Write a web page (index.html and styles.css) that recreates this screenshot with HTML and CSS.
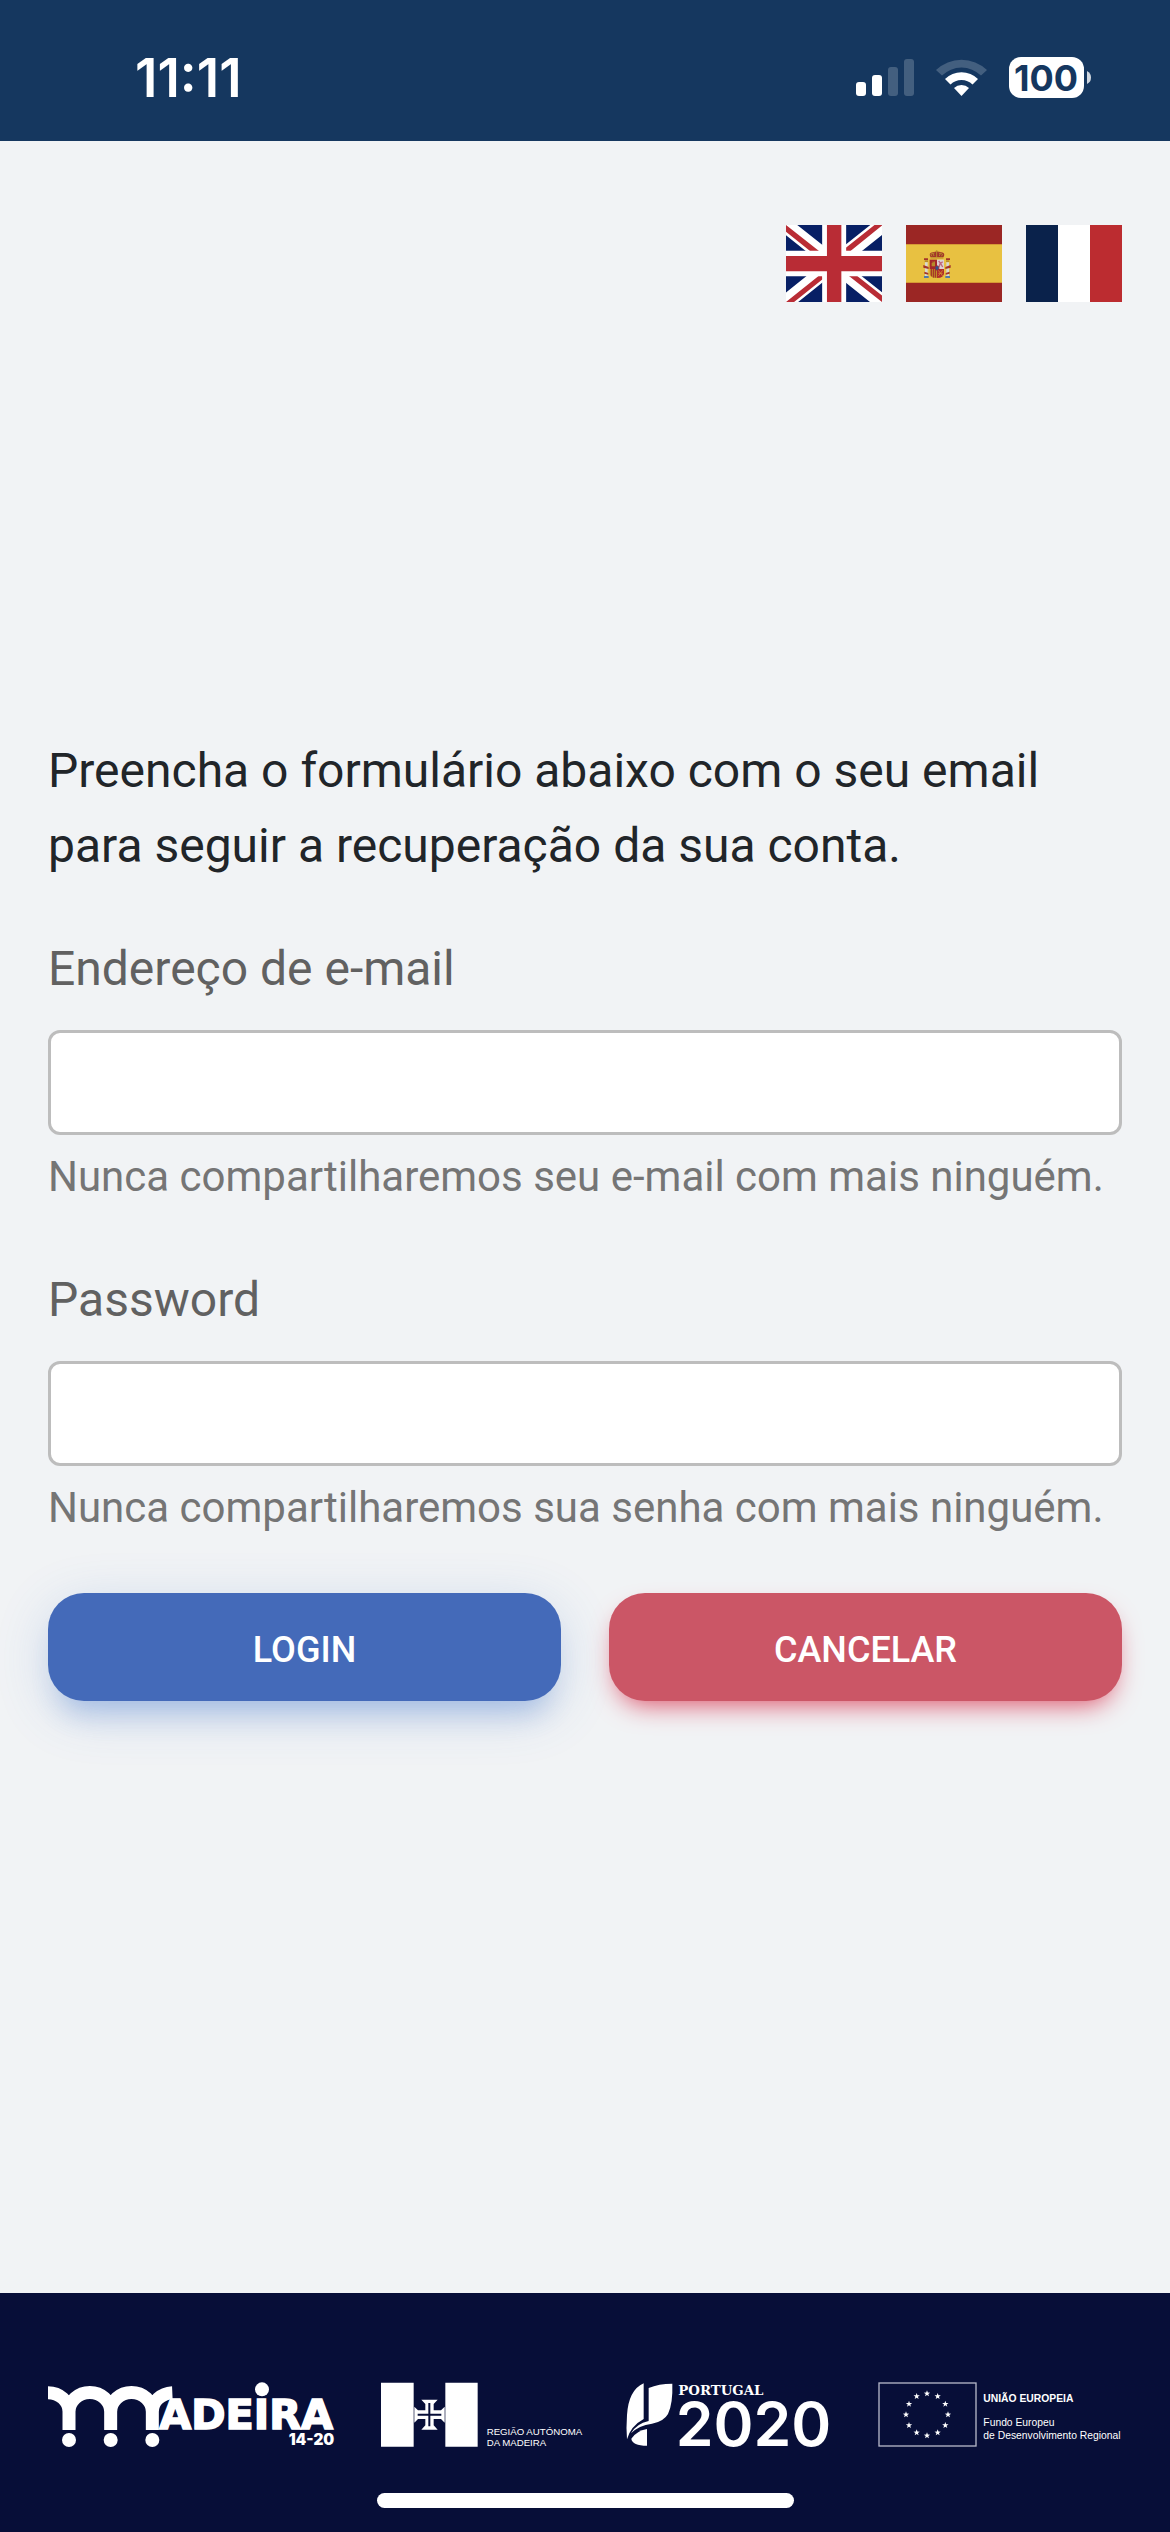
FILE: index.html
```html
<!DOCTYPE html>
<html lang="pt">
<head>
    <meta charset="UTF-8">
    <meta name="viewport" content="width=device-width, initial-scale=1.0">
    <title>Login</title>
    <link rel="stylesheet" href="styles.css">
</head>
<body>
    <header class="status-bar">
        <span class="time">11:11</span>
        <svg class="status-icons" viewBox="856 56 236 44" fill="#fff" aria-hidden="true">
            <!-- signal -->
            <rect x="856" y="82" width="10" height="14" rx="3"/>
            <rect x="872" y="75" width="10" height="21" rx="3"/>
            <rect x="888" y="67" width="10" height="29" rx="3" opacity=".2"/>
            <rect x="904" y="59" width="10" height="37" rx="3" opacity=".2"/>
            <!-- wifi -->
            <path d="M936 70A37 37 0 0 1 987 70L981 75.500A28 28 0 0 0 942 75.500Z" opacity=".2"/>
            <path d="M945 79A23.500 23.500 0 0 1 978 79L972.500 84.500A15.500 15.500 0 0 0 950.500 84.500Z"/>
            <path d="M954 88A11 11 0 0 1 969 88L961.500 96Z"/>
            <!-- battery -->
            <rect x="1009" y="57" width="75" height="41" rx="12"/>
            <path d="M1087 71Q1091 73 1091 77.500T1087 84Z" opacity=".8"/>
            <text class="battery-text" x="1046" y="91" text-anchor="middle">100</text>
        </svg>
    </header>

    <main class="content">
        <nav class="languages">
            <a href="#en" aria-label="English">
                <svg class="flag" viewBox="0 0 640 480" preserveAspectRatio="none">
                    <path fill="#071f65" d="M0 0h640v480H0z"/>
                    <path fill="#fff" d="m75 0 244 181L562 0h78v62L400 241l240 178v61h-80L320 301 81 480H0v-60l239-178L0 64V0z"/>
                    <path fill="#b92c35" d="m424 281 216 159v40L369 281zm-184 20 6 35L54 480H0zM640 0v3L391 191l2-44L590 0zM0 0l239 176h-60L0 42z"/>
                    <path fill="#fff" d="M241 0v480h160V0zM0 160v160h640V160z"/>
                    <path fill="#b92c35" d="M0 193v96h640v-96zM273 0v480h96V0z"/>
                </svg>
            </a>
            <a href="#es" aria-label="Español">
                <svg class="flag" viewBox="0 0 288 231" preserveAspectRatio="none">
                    <path fill="#9b2624" d="M0 0h288v231H0z"/>
                    <path fill="#e8c141" d="M0 58h288v115H0z"/>
                    <path fill="#d69a35" d="M0 57h288v3H0zM0 171h288v3H0z"/>
                    <!-- pillars -->
                    <path fill="#d8d8d0" d="M57 112h8v42h-8zM121 112h8v42h-8z"/>
                    <path fill="#a3352a" d="M54 100h12v5H54zM120 100h12v5h-12zM52 120l16 6v6l-16-4zM134 120l-16 6v6l16-4zM55 140l12 4v5l-12-3zM131 140l-12 4v5l12-3z"/>
                    <path fill="#b78b2b" d="M56 106h10v5H56zM120 106h10v5h-10z"/>
                    <path fill="#5379a5" d="M54 153h14v6H54zM118 153h14v6h-14z"/>
                    <!-- shield -->
                    <path fill="#a3272a" d="M71 104h22v28H71z"/>
                    <path fill="#ddd0d2" d="M93 104h21v28H93z"/>
                    <path fill="#bf8e26" d="M71 132h22v27q-22 0-22-14z"/>
                    <path fill="#b12d2b" d="M93 132h21v13q0 14-21 14z"/>
                    <path stroke="#a3272a" stroke-width="3" d="M76 132v22M82 132v26M88 132v26"/>
                    <path fill="none" stroke="#d99c34" stroke-width="2" d="M97 136l13 17M110 136l-13 17M97 145h13"/>
                    <path fill="#b78b2b" d="M77 113h3v-4h2v3h3v-3h2v15H77z"/>
                    <path fill="none" stroke="#bd6680" stroke-width="4" d="M98 108l6 7 6-5M103 114l-4 12M105 117l5 9"/>
                    <ellipse cx="93" cy="129" rx="6" ry="7" fill="#34518a" stroke="#a3272a" stroke-width="2"/>
                    <!-- crown -->
                    <path fill="#a3352a" d="M74 97q-8-13 7-15 12-5 24 0 15 2 7 15z"/>
                    <path fill="none" stroke="#b78b2b" stroke-width="3" d="M73 99h39M78 94q-8-9 4-9M92 96V76M106 94q8-9-4-9M84 93q-5-6 1-10M100 93q5-6-1-10M89 79h7"/>
                </svg>
            </a>
            <a href="#fr" aria-label="Français">
                <svg class="flag" viewBox="0 0 3 2" preserveAspectRatio="none">
                    <path fill="#0a224b" d="M0 0h1v2H0z"/>
                    <path fill="#fff" d="M1 0h1v2H1z"/>
                    <path fill="#bc2c30" d="M2 0h1v2H2z"/>
                </svg>
            </a>
        </nav>

        <form class="login-form">
            <p class="intro">Preencha o formulário abaixo com o seu email para seguir a recuperação da sua conta.</p>

            <div class="form-group">
                <label for="email">Endereço de e-mail</label>
                <input type="email" id="email" name="email" aria-describedby="emailHelp">
                <small id="emailHelp">Nunca compartilharemos seu e-mail com mais ninguém.</small>
            </div>

            <div class="form-group">
                <label for="password">Password</label>
                <input type="password" id="password" name="password" aria-describedby="passwordHelp">
                <small id="passwordHelp">Nunca compartilharemos sua senha com mais ninguém.</small>
            </div>

            <div class="buttons">
                <button type="submit" class="btn btn-login">LOGIN</button>
                <button type="button" class="btn btn-cancel">CANCELAR</button>
            </div>
        </form>
    </main>

    <footer class="footer">
        <div class="logos">
            <svg class="logo logo-madeira" viewBox="54 66 876 195" fill="#fff">
                <path fill="none" stroke="#fff" stroke-width="39" d="M54 98A63 57 0 0 1 117 155V210M117 155A62 57 0 0 1 242 155V210M242 155A62 57 0 0 1 367 155V210M367 155A63 57 0 0 1 427 98"/>
                <circle cx="117" cy="240" r="21"/>
                <circle cx="242" cy="240" r="21"/>
                <circle cx="367" cy="240" r="21"/>
                <circle cx="696" cy="88" r="21"/>
                <text class="madeira-name" x="388" y="208">ADEIRA</text>
                <text class="madeira-years" x="776" y="256">14-20</text>
            </svg>
            <svg class="logo logo-region" viewBox="63 66 612 195" fill="#fff">
                <path d="M63 68h98v192H63zM256 68h97v192h-97z"/>
                <path d="M184 119H233L221 132V151H243L254 140V188L243 177H221V196L233 209H184L196 196V177H174L163 188V140L174 151H196V132Z"/>
                <path stroke="#070e38" stroke-width="6" d="M208 129V199M173 164H244"/>
                <text class="region-text" x="380" y="224">REGIÃO AUTÓNOMA</text>
                <text class="region-text" x="380" y="258">DA MADEIRA</text>
            </svg>
            <svg class="logo logo-portugal" viewBox="47 66 633 195" fill="#fff">
                <path d="M100 70V177Q61 198 50 238Q47 205 50 165Q55 90 100 70Z"/>
                <path d="M115 84Q145 71 186 71Q188 130 173 162Q160 185 125 191Q85 196 62 220Q78 191 115 183Z"/>
                <path d="M110 207V257Q66 257 63 236Q78 213 110 207Z"/>
                <text class="portugal-name" x="204" y="104">PORTUGAL</text>
                <text class="portugal-year" x="196" y="259">2020</text>
            </svg>
            <svg class="logo logo-europe" viewBox="54 66 732 195" fill="#fff">
                <defs>
                    <path id="star" d="M0-10 2.400-3.200 9.500-3 3.800 1.200 5.900 8.100 0 4-5.900 8.100-3.800 1.200-9.500-3-2.400-3.200Z"/>
                </defs>
                <rect x="57" y="69" width="291" height="189" fill="none" stroke="#b4b7c8" stroke-width="4"/>
                <use href="#star" x="201" y="101"/>
                <use href="#star" x="233" y="109"/>
                <use href="#star" x="256" y="132"/>
                <use href="#star" x="264" y="164"/>
                <use href="#star" x="256" y="196"/>
                <use href="#star" x="233" y="218"/>
                <use href="#star" x="201" y="227"/>
                <use href="#star" x="170" y="218"/>
                <use href="#star" x="147" y="196"/>
                <use href="#star" x="138" y="164"/>
                <use href="#star" x="147" y="132"/>
                <use href="#star" x="170" y="109"/>
                <text class="europe-title" x="370" y="125">UNIÃO EUROPEIA</text>
                <text class="europe-text" x="370" y="197">Fundo Europeu</text>
                <text class="europe-text" x="370" y="236">de Desenvolvimento Regional</text>
            </svg>
        </div>
        <div class="home-indicator"></div>
    </footer>
</body>
</html>
```
FILE: styles.css
```css
* {
    box-sizing: border-box;
}
body {
    margin: 0;
    min-height: 100vh;
    display: flex;
    flex-direction: column;
    font-family: Roboto, sans-serif;
    font-size: 48px;
    line-height: 75px;
    color: #212529;
    background-color: #f1f3f5;
}
.status-bar {
    display: flex;
    align-items: center;
    justify-content: space-between;
    padding: 48px 78px 33px 135px;
    color: #fff;
    background-color: #15375f;
}
.time {
    font-family: Inter, sans-serif;
    font-size: 53px;
    font-weight: 600;
    line-height: 60px;
}
.status-icons {
    width: 236px;
    height: 44px;
}
.battery-text {
    font-family: Inter, sans-serif;
    font-size: 36px;
    font-weight: 700;
    fill: #15375f;
}
.content {
    flex: 1;
    display: grid;
    grid-template-rows: 1fr auto 1fr;
    padding: 0 48px;
}
.languages {
    display: flex;
    justify-content: flex-end;
    align-items: flex-start;
    gap: 24px;
    padding-top: 84px;
}
.flag {
    display: block;
    width: 96px;
    height: 77px;
}
.intro {
    margin: 0 0 48px;
}
.form-group {
    margin-bottom: 52px;
}
label {
    display: block;
    margin-bottom: 24px;
    color: #616161;
}
input {
    display: block;
    width: 100%;
    height: 105px;
    padding: 12px 36px;
    border: 3px solid #bdbdbd;
    border-radius: 12px;
    font: inherit;
    color: #4f4f4f;
    background-color: #fff;
}
small {
    display: block;
    margin-top: 9px;
    font-size: 42px;
    line-height: 66px;
    color: #757575;
}
.buttons {
    display: grid;
    grid-template-columns: 1fr 1fr;
    gap: 48px;
}
.btn {
    height: 108px;
    padding: 6px 24px 0;
    border: none;
    border-radius: 36px;
    font-family: inherit;
    font-size: 36px;
    font-weight: 500;
    color: #fff;
    cursor: pointer;
}
.btn-login {
    background-color: #446ab9;
    box-shadow: 0 24px 27px -12px rgba(59, 113, 202, 0.3), 0 12px 54px rgba(59, 113, 202, 0.2);
}
.btn-cancel {
    background-color: #cb5666;
    box-shadow: 0 12px 27px -9px #dc4c64;
}
.footer {
    padding: 89px 48px 24px;
    background-color: #070e38;
}
.logos {
    display: flex;
    justify-content: space-between;
    margin-bottom: 46px;
}
.logo {
    height: 65px;
    min-width: 0;
}
.logo-madeira {
    flex: 0 1 292px;
}
.logo-region {
    flex: 0 1 204px;
}
.logo-portugal {
    flex: 0 1 211px;
}
.logo-europe {
    flex: 0 1 244px;
}
.madeira-name {
    font: 700 124px "DejaVu Sans", sans-serif;
    stroke: #fff;
    stroke-width: 5px;
}
.madeira-years {
    font: 900 46px Inter, sans-serif;
}
.region-text {
    font: 29px "Liberation Sans", sans-serif;
}
.portugal-name {
    font: 700 40px "DejaVu Serif", serif;
}
.portugal-year {
    font: 600 182px Inter, sans-serif;
}
.europe-title {
    font: 700 31px "Liberation Sans", sans-serif;
}
.europe-text {
    font: 31px "Liberation Sans", sans-serif;
}
.home-indicator {
    width: 417px;
    max-width: 100%;
    height: 15px;
    margin: 0 auto;
    border-radius: 8px;
    background-color: #fff;
}
```
